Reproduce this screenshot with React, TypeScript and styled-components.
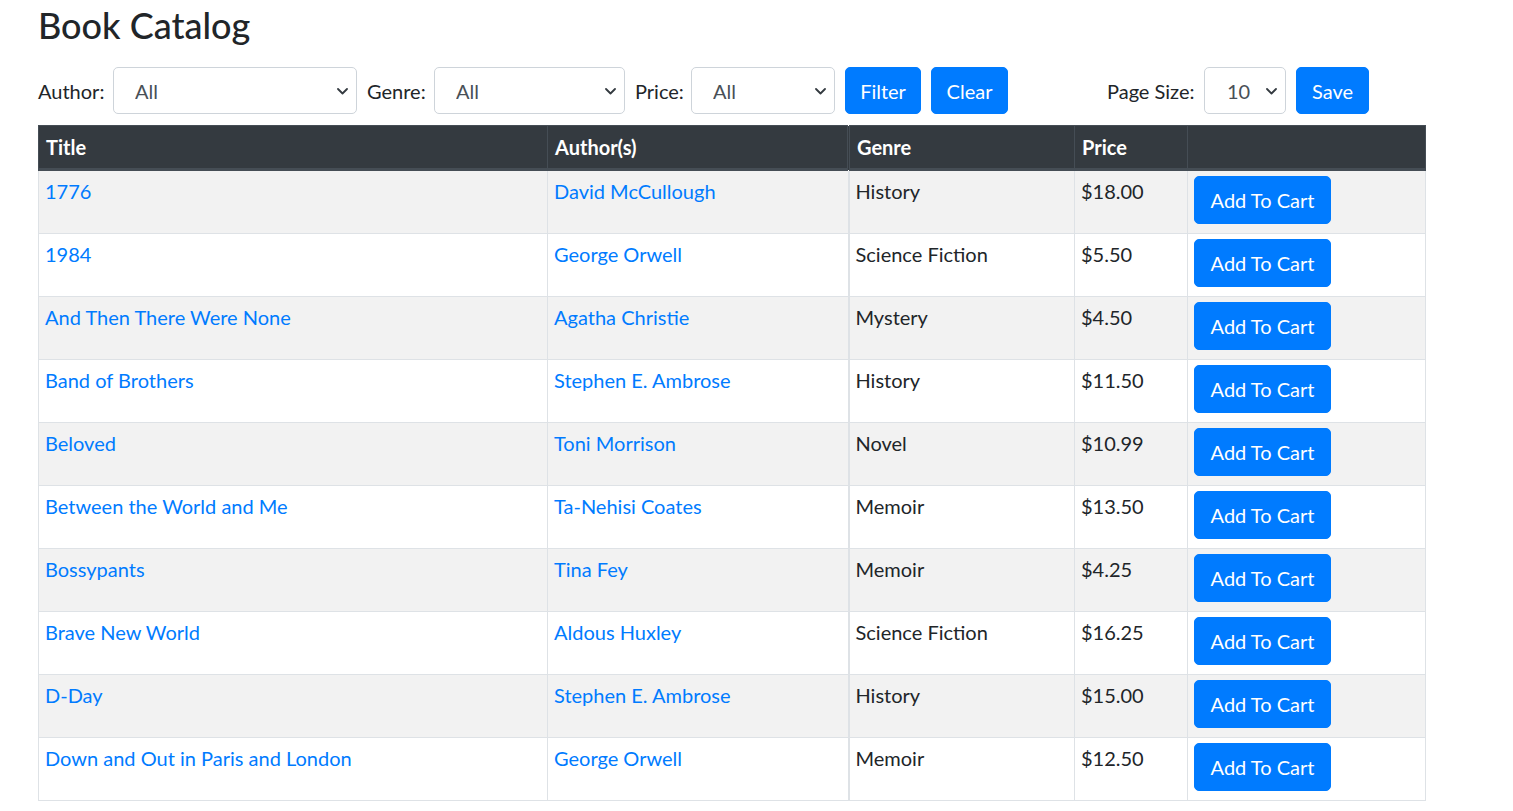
import React from "react";
import styled, { createGlobalStyle } from "styled-components";

const GlobalStyle = createGlobalStyle`
  html, body { margin: 0; padding: 0; background: #fff; }
  body {
    font-family: Lato, "Liberation Sans", sans-serif;
    font-size: 20px;
    line-height: 1.5;
    color: #212529;
  }
  * { box-sizing: border-box; }
`;

const Page = styled.div`
  padding: 4px 0 0 38px;
`;

const Title = styled.h1`
  margin: 0 0 20px;
  font-size: 36px;
  font-weight: 500;
  line-height: 1.2;
  color: #212529;
`;

const Toolbar = styled.form`
  display: flex;
  align-items: center;
  gap: 10px;
  height: 47px;
  margin-bottom: 11px;
`;

const Label = styled.label<{ $w: number; $push?: number }>`
  flex: none;
  width: ${(p) => p.$w}px;
  margin-left: ${(p) => p.$push ?? 0}px;
  white-space: nowrap;
  line-height: 30px;
`;

const SelectWrap = styled.div<{ $w: number }>`
  position: relative;
  flex: none;
  width: ${(p) => p.$w}px;
  height: 47px;
`;

const Select = styled.select<{ $pad?: number }>`
  appearance: none;
  -webkit-appearance: none;
  width: 100%;
  height: 100%;
  border: 1px solid #ced4da;
  border-radius: 5px;
  background: #fff;
  color: #495057;
  font: inherit;
  padding: 0 30px 0 ${(p) => p.$pad ?? 21}px;
  outline: none;
`;

const Chevron = styled.svg`
  position: absolute;
  right: 9px;
  top: 50%;
  width: 11px;
  height: 7px;
  margin-top: -3px;
  pointer-events: none;
`;

const Button = styled.button<{ $w?: number }>`
  display: block;
  flex: none;
  width: ${(p) => (p.$w ? `${p.$w}px` : "auto")};
  height: 47px;
  padding: 0 14px;
  border: 1px solid #007bff;
  border-radius: 5px;
  background: #007bff;
  color: #fff;
  font: inherit;
  line-height: 30px;
  white-space: nowrap;
  text-align: center;
  cursor: pointer;
`;

const CartButton = styled(Button)`
  height: 48px;
`;

const Table = styled.table`
  width: 1387px;
  border-collapse: collapse;
  table-layout: fixed;
`;

const HeadCell = styled.th<{ $w: number; $split?: boolean }>`
  width: ${(p) => p.$w}px;
  background: #343a40;
  color: #fff;
  font-weight: 700;
  text-align: left;
  line-height: 30px;
  padding: 6px 7px;
  border: 1px solid #454d55;
  border-bottom: 3px solid #454d55;
  border-left-width: ${(p) => (p.$split ? 3 : 1)}px;
  border-left-style: ${(p) => (p.$split ? "double" : "solid")};
  vertical-align: bottom;
`;

const Row = styled.tr<{ $striped: boolean }>`
  background: ${(p) => (p.$striped ? "#f2f2f2" : "#fff")};
`;

const Cell = styled.td<{ $split?: boolean }>`
  height: 63px;
  padding: 5px 7px 9px 6px;
  line-height: 30px;
  vertical-align: top;
  border: 1px solid #dee2e6;
  border-left-width: ${(p) => (p.$split ? 2 : 1)}px;
  white-space: nowrap;
  overflow: hidden;
`;

const Link = styled.a`
  color: #007bff;
  text-decoration: none;
`;

type Book = { title: string; author: string; genre: string; price: string };

const books: Book[] = [
  { title: "1776", author: "David McCullough", genre: "History", price: "$18.00" },
  { title: "1984", author: "George Orwell", genre: "Science Fiction", price: "$5.50" },
  { title: "And Then There Were None", author: "Agatha Christie", genre: "Mystery", price: "$4.50" },
  { title: "Band of Brothers", author: "Stephen E. Ambrose", genre: "History", price: "$11.50" },
  { title: "Beloved", author: "Toni Morrison", genre: "Novel", price: "$10.99" },
  { title: "Between the World and Me", author: "Ta-Nehisi Coates", genre: "Memoir", price: "$13.50" },
  { title: "Bossypants", author: "Tina Fey", genre: "Memoir", price: "$4.25" },
  { title: "Brave New World", author: "Aldous Huxley", genre: "Science Fiction", price: "$16.25" },
  { title: "D-Day", author: "Stephen E. Ambrose", genre: "History", price: "$15.00" },
  { title: "Down and Out in Paris and London", author: "George Orwell", genre: "Memoir", price: "$12.50" },
];

const ChevronIcon = () => (
  <Chevron viewBox="0 0 11 7" fill="none">
    <path d="M1 1l4.5 4.5L10 1" stroke="#343a40" strokeWidth="1.8" strokeLinecap="round" strokeLinejoin="round" />
  </Chevron>
);

const Dropdown = ({ width, value, pad }: { width: number; value: string; pad?: number }) => (
  <SelectWrap $w={width}>
    <Select $pad={pad} defaultValue={value}>
      <option>{value}</option>
    </Select>
    <ChevronIcon />
  </SelectWrap>
);

export default function App() {
  return (
    <Page>
      <GlobalStyle />
      <Title>Book Catalog</Title>
      <Toolbar onSubmit={(e) => e.preventDefault()}>
        <Label $w={65}>Author:</Label>
        <Dropdown width={244} value="All" />
        <Label $w={57}>Genre:</Label>
        <Dropdown width={191} value="All" />
        <Label $w={46}>Price:</Label>
        <Dropdown width={144} value="All" />
        <Button type="button" $w={76}>Filter</Button>
        <Button type="button" $w={77}>Clear</Button>
        <Label $w={87} $push={89}>Page Size:</Label>
        <Dropdown width={82} value="10" pad={22} />
        <Button type="button" $w={73}>Save</Button>
      </Toolbar>
      <Table>
        <thead>
          <tr>
            <HeadCell $w={509}>Title</HeadCell>
            <HeadCell $w={301}>Author(s)</HeadCell>
            <HeadCell $w={226} $split>Genre</HeadCell>
            <HeadCell $w={113}>Price</HeadCell>
            <HeadCell $w={238}></HeadCell>
          </tr>
        </thead>
        <tbody>
          {books.map((b, i) => (
            <Row key={b.title} $striped={i % 2 === 0}>
              <Cell><Link href="#">{b.title}</Link></Cell>
              <Cell><Link href="#">{b.author}</Link></Cell>
              <Cell $split>{b.genre}</Cell>
              <Cell>{b.price}</Cell>
              <Cell><CartButton type="button" $w={137}>Add To Cart</CartButton></Cell>
            </Row>
          ))}
        </tbody>
      </Table>
    </Page>
  );
}
